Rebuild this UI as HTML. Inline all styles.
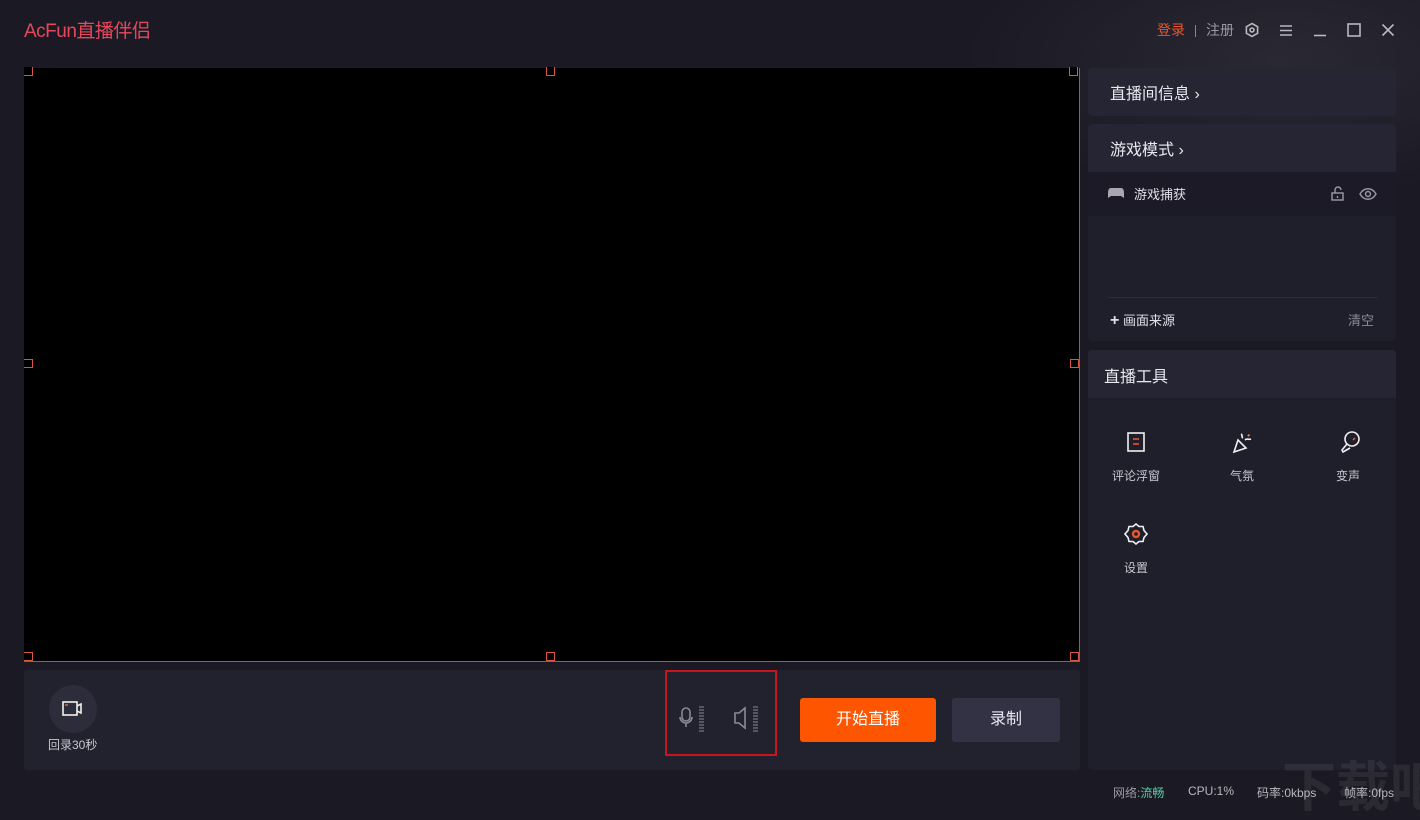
<!DOCTYPE html>
<html><head><meta charset="utf-8">
<style>
*{margin:0;padding:0;box-sizing:border-box}
html,body{width:1420px;height:820px;overflow:hidden}
body{background:#1b1a24;font-family:"Liberation Sans","Noto Sans CJK SC",sans-serif;color:#d8d8e0;position:relative}
.abs{position:absolute;white-space:nowrap}
.logo{left:24px;top:16px;font-size:19px;color:#e8475a;letter-spacing:-0.5px}
.tb{top:20px;font-size:14px}
.prev{left:24px;top:68px;width:1056px;height:594px;background:#000;border:1px solid #c8483a;border-top:none;border-left:none}
.h{width:9px;height:9px;border:1px solid #d9573f;background:#000}
.pan{background:#262534;border-radius:4px}
.hd{font-size:16px;color:#e8e8ee}
.small{font-size:12px;color:#c8c8d0}
</style></head><body>
<div class="abs" style="left:960px;top:0;width:460px;height:200px;background:radial-gradient(ellipse at 70% 30%,#2a2832,#1b1a24 70%)"></div>
<div class="abs logo">AcFun直播伴侣</div>
<div class="abs tb" style="left:1157px;color:#e8562e">登录</div>
<div class="abs" style="left:1195px;top:25px;width:1px;height:12px;background:#888"></div>
<div class="abs tb" style="left:1206px;color:#9a9aa4">注册</div>
<svg class="abs" style="left:1244px;top:22px" width="16" height="16" viewBox="0 0 16 16" fill="none" stroke="#b8b8c0" stroke-width="1.6"><path d="M8 1.5l5.6 3.2v6.6L8 14.5l-5.6-3.2V4.7z"/><circle cx="8" cy="8" r="2"/></svg>
<svg class="abs" style="left:1279px;top:24px" width="14" height="13" stroke="#b8b8c0" stroke-width="1.6"><path d="M1 2h12M1 6.5h12M1 11h12"/></svg>
<svg class="abs" style="left:1313px;top:24px" width="14" height="13" stroke="#b8b8c0" stroke-width="1.6"><path d="M1 11.5h12"/></svg>
<svg class="abs" style="left:1347px;top:23px" width="14" height="14" fill="none" stroke="#b8b8c0" stroke-width="1.6"><rect x="1" y="1" width="12" height="12"/></svg>
<svg class="abs" style="left:1381px;top:23px" width="14" height="14" stroke="#b8b8c0" stroke-width="1.6"><path d="M1.5 1.5l11 11M12.5 1.5l-11 11"/></svg>

<div class="abs prev"></div>
<div class="abs h" style="left:24px;top:67px;border-top:none;border-left:none"></div>
<div class="abs h" style="left:546px;top:67px;border-top:none"></div>
<div class="abs h" style="left:1069px;top:67px;border-top:none"></div>
<div class="abs h" style="left:24px;top:359px;border-left:none"></div>
<div class="abs h" style="left:1070px;top:359px"></div>
<div class="abs h" style="left:24px;top:652px;border-left:none"></div>
<div class="abs h" style="left:546px;top:652px"></div>
<div class="abs h" style="left:1070px;top:652px"></div>

<div class="abs" style="left:24px;top:670px;width:1056px;height:100px;background:#22212e;border-radius:3px"></div>
<div class="abs" style="left:49px;top:685px;width:48px;height:48px;border-radius:50%;background:#2d2c3a"></div>
<svg class="abs" style="left:61px;top:700px" width="24" height="18" fill="none" stroke="#f0f0f0" stroke-width="1.6"><rect x="2" y="2" width="14" height="13"/><path d="M16 6l4-2v9l-4-2"/><rect x="4" y="4" width="3" height="2" fill="#c0503a" stroke="none"/></svg>
<div class="abs small" style="left:48px;top:736px">回录30秒</div>
<div class="abs" style="left:665px;top:670px;width:112px;height:86px;border:2px solid #c8141e"></div>
<svg class="abs" style="left:677px;top:705px" width="90" height="30" fill="none" stroke="#8a8a94" stroke-width="1.6"><rect x="5" y="3" width="8" height="13" rx="4"/><path d="M3 12a6 6 0 0 0 12 0M9 18v4"/><path d="M22 2h5M22 5h5M22 8h5M22 11h5M22 14h5M22 17h5M22 20h5M22 23h5M22 26h5" stroke-width="1"/><path d="M58 8h4l6-5v20l-6-5h-4z"/><path d="M76 2h5M76 5h5M76 8h5M76 11h5M76 14h5M76 17h5M76 20h5M76 23h5M76 26h5" stroke-width="1"/></svg>
<div class="abs" style="left:800px;top:698px;width:136px;height:44px;background:#fe5500;border-radius:3px;color:#fff;font-size:16px;text-align:center;line-height:44px">开始直播</div>
<div class="abs" style="left:952px;top:698px;width:108px;height:44px;background:#333245;border-radius:3px;color:#e8e8ee;font-size:16px;text-align:center;line-height:44px">录制</div>

<div class="abs pan" style="left:1088px;top:68px;width:308px;height:48px"></div>
<div class="abs hd" style="left:1110px;top:80px">直播间信息 ›</div>
<div class="abs pan" style="left:1088px;top:124px;width:308px;height:217px;background:#1f1e2b"></div>
<div class="abs" style="left:1088px;top:124px;width:308px;height:48px;background:#262534;border-radius:4px 4px 0 0"></div>
<div class="abs hd" style="left:1110px;top:136px">游戏模式 ›</div>
<div class="abs" style="left:1088px;top:172px;width:308px;height:44px;background:#1b1a26"></div>
<svg class="abs" style="left:1108px;top:187px" width="16" height="12"><path d="M3 1h10c2 0 3 2 3 5v5l-3-2H3l-3 2V6c0-3 1-5 3-5z" fill="#a8a8b0"/></svg>
<div class="abs" style="left:1134px;top:184px;font-size:13px;color:#e0e0e6">游戏捕获</div>
<svg class="abs" style="left:1330px;top:186px" width="16" height="16" fill="none" stroke="#9a9aa4" stroke-width="1.4"><rect x="2" y="7" width="11" height="7"/><path d="M5 7V4a3 3 0 0 1 6 0"/><path d="M7.5 10v2"/></svg>
<svg class="abs" style="left:1359px;top:187px" width="18" height="14" fill="none" stroke="#9a9aa4" stroke-width="1.4"><path d="M1 7c4-7 12-7 16 0c-4 7-12 7-16 0z"/><circle cx="9" cy="7" r="2.5"/></svg>
<div class="abs" style="left:1108px;top:297px;width:270px;height:1px;background:#2c2b38"></div>
<div class="abs" style="left:1110px;top:310px;font-size:13px;color:#e0e0e6"><b style="font-size:16px">+</b> 画面来源</div>
<div class="abs" style="left:1348px;top:310px;font-size:13px;color:#8a8a94">清空</div>

<div class="abs pan" style="left:1088px;top:350px;width:308px;height:420px;background:#1f1e2b"></div>
<div class="abs" style="left:1088px;top:350px;width:308px;height:48px;background:#262534;border-radius:4px 4px 0 0"></div>
<div class="abs hd" style="left:1104px;top:363px">直播工具</div>
<svg class="abs" style="left:1126px;top:431px" width="20" height="22" fill="none" stroke="#f0f0f0" stroke-width="1.6"><rect x="2" y="2" width="16" height="18"/><path d="M7 8h6" stroke="#e8562e"/><path d="M7 13h6" stroke="#e8562e"/></svg>
<div class="abs small" style="left:1112px;top:467px">评论浮窗</div>
<svg class="abs" style="left:1232px;top:430px" width="24" height="24" fill="none" stroke="#f0f0f0" stroke-width="1.6"><path d="M2 22l4-12 8 8z"/><path d="M9 4c2 1 0 3 2 4M13 10c2-2 4 0 6-1M16 6l1-1"/><circle cx="17" cy="5" r="1" fill="#e8562e" stroke="none"/></svg>
<div class="abs small" style="left:1230px;top:467px">气氛</div>
<svg class="abs" style="left:1338px;top:430px" width="24" height="24" fill="none" stroke="#f0f0f0" stroke-width="1.6"><circle cx="14" cy="9" r="7"/><path d="M9 14l-5 6 1 2 7-4"/><path d="M15 10l2-2" stroke="#e8562e"/></svg>
<div class="abs small" style="left:1336px;top:467px">变声</div>
<svg class="abs" style="left:1124px;top:522px" width="24" height="24" fill="none" stroke="#f0f0f0" stroke-width="1.6"><path d="M12 2l3 2.5 4 0 1 4 3 3.5-3 3.5-1 4-4 0-3 2.5-3-2.5-4 0-1-4L1 12l3-3.5 1-4 4 0z"/><circle cx="12" cy="12" r="3" stroke="#e8562e" stroke-width="2.4"/></svg>
<div class="abs small" style="left:1124px;top:559px">设置</div>

<div class="abs" style="left:1282px;top:758px;font-size:54px;line-height:60px;font-weight:bold;color:rgba(255,255,255,0.07);letter-spacing:0px">下载吧</div>
<div class="abs" style="left:1113px;top:784px;font-size:12px;color:#9a9aa4">网络:<span style="color:#4fd2a8">流畅</span></div>
<div class="abs" style="left:1188px;top:784px;font-size:12px;color:#b8b8c0">CPU:1%</div>
<div class="abs" style="left:1257px;top:784px;font-size:12px;color:#b8b8c0">码率:0kbps</div>
<div class="abs" style="left:1344px;top:784px;font-size:12px;color:#b8b8c0">帧率:0fps</div>
</body></html>
